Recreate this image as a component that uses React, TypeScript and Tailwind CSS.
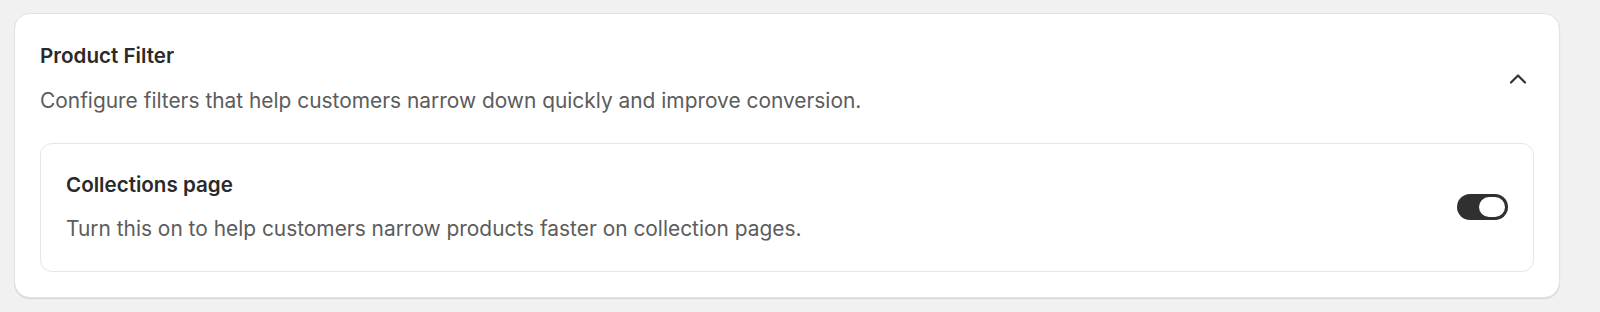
import React from "react";

export default function App() {
  return (
    <div
      className="w-[1600px] h-[312px] bg-[#f1f1f1] pt-[13px] pl-[14px] pr-[40px]"
      style={{ fontFamily: "Inter, 'Noto Sans', sans-serif" }}
    >
      <div className="bg-white rounded-[16px] border border-[#e3e3e3] shadow-[0_1px_1px_rgba(0,0,0,0.12)] px-[25px] pt-[28px] pb-[25px]">
        <div className="flex items-center justify-between">
          <div className="flex flex-col">
            <div className="text-[20.6px] leading-[28px] font-semibold text-[#2a2a2a]">Product Filter</div>
            <div className="mt-[17px] text-[20.9px] leading-[28px] text-[#5c5c5c]">
              Configure filters that help customers narrow down quickly and improve conversion.
            </div>
          </div>
          <svg width="20" height="20" viewBox="0 0 20 20" className="mr-[6px]" fill="none">
            <path d="M3 13.5L10 6.5L17 13.5" stroke="#333" strokeWidth="2.2" strokeLinecap="round" strokeLinejoin="round" />
          </svg>
        </div>
        <div className="mt-[28px] border border-[#e6e6e6] rounded-[12px] pl-[25px] pr-[25px] pt-[27px] pb-[28px] flex items-center justify-between">
          <div className="flex flex-col">
            <div className="text-[20.6px] leading-[28px] font-semibold text-[#2a2a2a]">Collections page</div>
            <div className="mt-[16px] text-[20.9px] leading-[28px] text-[#5c5c5c]">
              Turn this on to help customers narrow products faster on collection pages.
            </div>
          </div>
          <div className="w-[51px] h-[26px] rounded-full bg-[#303030] flex items-center justify-end pr-[3px]">
            <div className="w-[26px] h-[20px] rounded-full bg-white" />
          </div>
        </div>
      </div>
    </div>
  );
}
